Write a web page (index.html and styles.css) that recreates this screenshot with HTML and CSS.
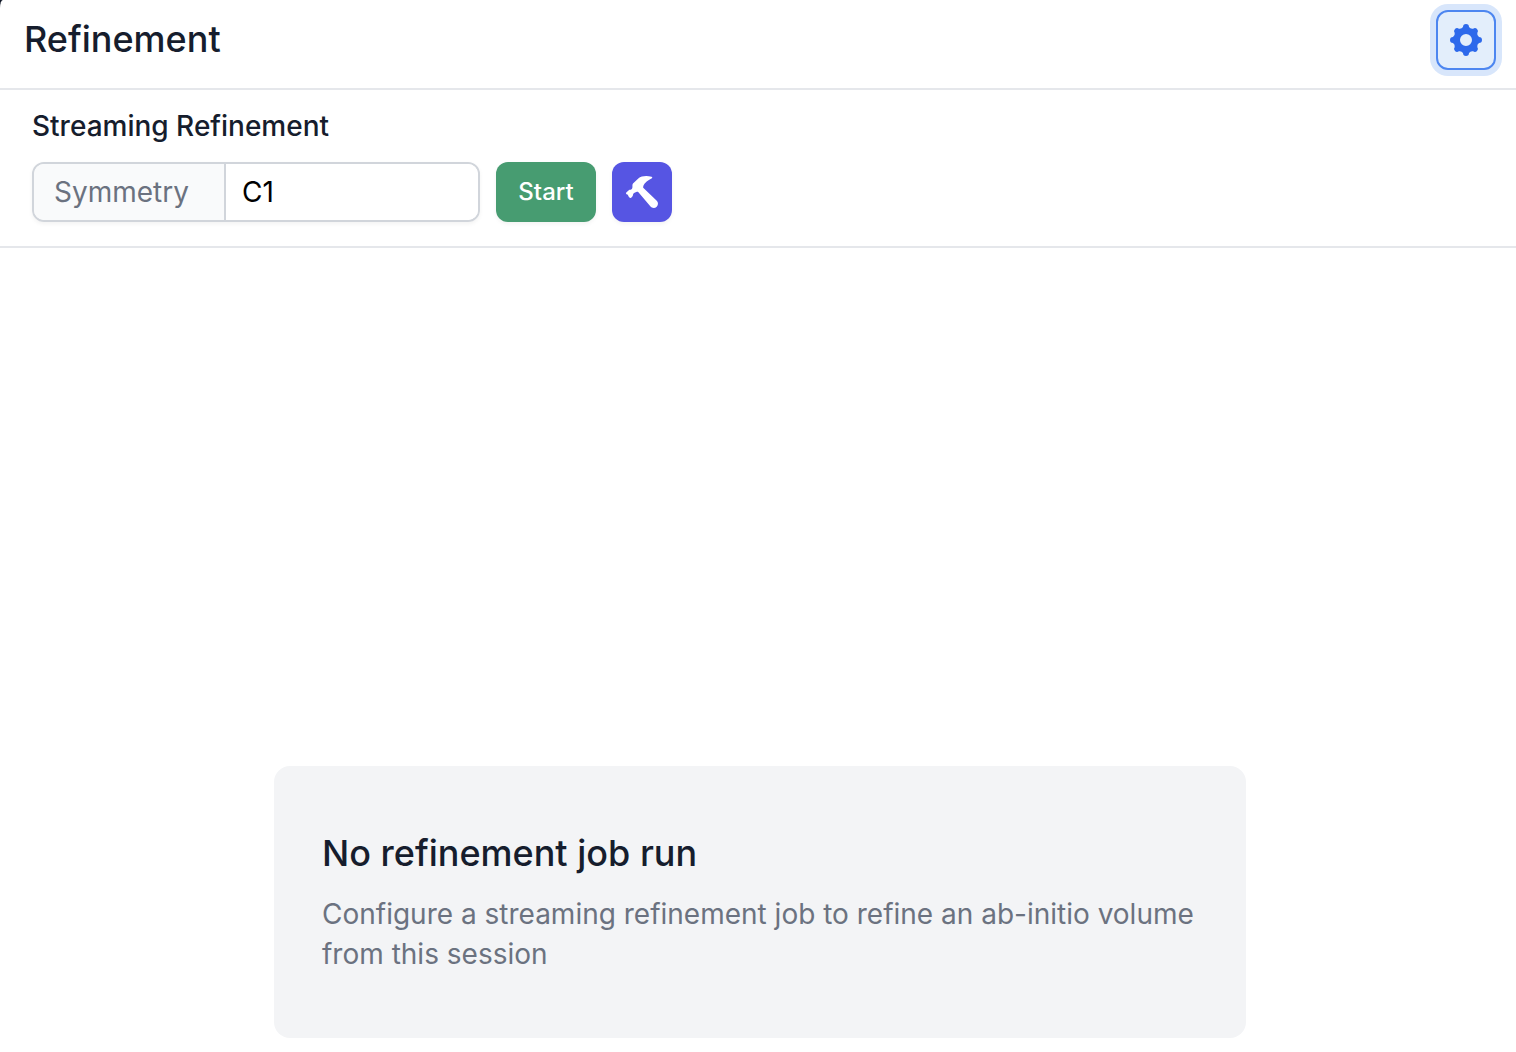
FILE: index.html
```html
<!DOCTYPE html>
<html lang="en">

<head>
    <meta charset="UTF-8" />
    <meta name="viewport" content="width=device-width,initial-scale=1.0" />
    <title>Refinement</title>
    <link rel="stylesheet" href="styles.css">
</head>

<body>
    <div class="panel">
        <header class="header">
            <h1>Refinement</h1>
            <button class="icon-btn settings-btn" type="button" aria-label="Settings">
                <svg viewBox="0 0 32 32" width="32" height="32" fill="currentColor" aria-hidden="true">
                    <path fill-rule="evenodd" d="M13 3A3 3 0 0 1 19 3Q20.500 5.200 23.100 4.700A3 3 0 0 1 27.300 8.900Q26.800 11.500 29 13A3 3 0 0 1 29 19Q26.800 20.500 27.300 23.100A3 3 0 0 1 23.100 27.300Q20.500 26.800 19 29A3 3 0 0 1 13 29Q11.500 26.800 8.900 27.300A3 3 0 0 1 4.700 23.100Q5.200 20.500 3 19A3 3 0 0 1 3 13Q5.200 11.500 4.700 8.900A3 3 0 0 1 8.900 4.700Q11.500 5.200 13 3zM16 10a6 6 0 1 0 0 12 6 6 0 0 0 0-12z" />
                </svg>
            </button>
        </header>

        <form class="toolbar">
            <h2>Streaming Refinement</h2>
            <div class="controls">
                <div class="input-group">
                    <label for="symmetry">Symmetry</label>
                    <input type="text" id="symmetry" value="C1" />
                </div>
                <button class="start-btn" type="button">Start</button>
                <button class="icon-btn build-btn" type="button" aria-label="Build">
                    <svg viewBox="0 0 32 32" width="32" height="32" fill="currentColor" aria-hidden="true">
                        <path d="M25.500 .8C21-.5 15.500-.2 12.300 2.400L7 7.600C5.800 8.900 7 11.200 6 12.700C5 14 3.800 13.400 2.800 14.200L.5 16.300C-.1 17-.1 17.600.4 18.200C1.400 18.200 2 18.800 2.300 19.700C2.600 20.600 3 21.200 3.800 21.700C4.500 22.100 5.200 21.800 5.700 21.200L6.700 20C7.200 19.200 6.800 18.500 7.500 17.600C8.800 16.300 10.600 15.800 12 15.800L24.300 30.300C26 32.300 28.900 32.500 30.700 30.700C32.500 28.900 32.300 26.100 30.500 24.500L17.200 11.800C16.800 8.500 20.300 5.200 25.500 2.500C26.500 2 26.500 1.100 25.500 .8z" />
                    </svg>
                </button>
            </div>
        </form>

        <main class="content">
            <section class="empty-state">
                <h3>No refinement job run</h3>
                <p>Configure a streaming refinement job to refine an ab-initio volume from this session</p>
            </section>
        </main>
    </div>
</body>

</html>
```
FILE: styles.css
```css
* {
    margin: 0;
    padding: 0;
    box-sizing: border-box;
}

html {
    background: #111827;
}

body {
    font-family: Inter, "Liberation Sans", sans-serif;
    font-size: 28px;
    line-height: 40px;
    color: #161d2d;
}

h1,
h2,
h3 {
    font-weight: 500;
}

.panel {
    display: flex;
    flex-direction: column;
    min-height: 100vh;
    background: #fff;
    border-top-left-radius: 3px 8px;
}

.header {
    display: flex;
    align-items: center;
    justify-content: space-between;
    padding: 10px 20px 18px 24px;
    border-bottom: 2px solid #e5e7eb;
}

.header h1,
.empty-state h3 {
    padding-bottom: 2px;
    font-size: 36px;
    line-height: 46px;
}

.toolbar {
    padding: 16px 32px 24px;
    border-bottom: 2px solid #e5e7eb;
}

.toolbar h2 {
    font-size: 28px;
    margin-bottom: 16px;
}

.controls {
    display: flex;
    gap: 16px;
}

.input-group {
    display: flex;
    width: 448px;
    height: 60px;
    border: 2px solid #d1d5db;
    border-radius: 12px;
    overflow: hidden;
    box-shadow: 0 2px 4px rgba(0, 0, 0, 0.05);
}

.input-group label {
    display: flex;
    align-items: center;
    width: 192px;
    padding: 0 20px;
    background: #f9fafb;
    border-right: 2px solid #d1d5db;
    color: #6b7280;
}

.input-group input {
    flex: 1;
    min-width: 0;
    padding: 0 16px;
    border: none;
    outline: none;
    font: inherit;
    color: #000;
    background: #fff;
}

button {
    font-family: inherit;
    border: none;
    border-radius: 12px;
    cursor: pointer;
}

.start-btn {
    min-width: 100px;
    height: 60px;
    padding: 0 20px 2px;
    font-size: 24px;
    font-weight: 500;
    color: #fff;
    background: #479c71;
    box-shadow: 0 2px 4px rgba(0, 0, 0, 0.05);
}

.icon-btn {
    display: flex;
    align-items: center;
    justify-content: center;
    width: 60px;
    height: 60px;
}

.settings-btn {
    color: #2d69eb;
    background: #e3eefb;
    border: 2px solid #4d86f0;
    box-shadow: 0 0 0 6px #d8e6fb;
}

.build-btn {
    color: #fff;
    background: #5655e3;
    box-shadow: 0 2px 4px rgba(0, 0, 0, 0.05);
}

.content {
    display: flex;
    flex: 1;
    align-items: flex-end;
    justify-content: center;
    padding: 24px 16px 14px 20px;
}

.empty-state {
    width: 100%;
    max-width: 972px;
    padding: 64px 48px;
    border-radius: 16px;
    background: #f3f4f6;
}

.empty-state h3 {
    margin-bottom: 16px;
}

.empty-state p {
    color: #6b7280;
}
```
